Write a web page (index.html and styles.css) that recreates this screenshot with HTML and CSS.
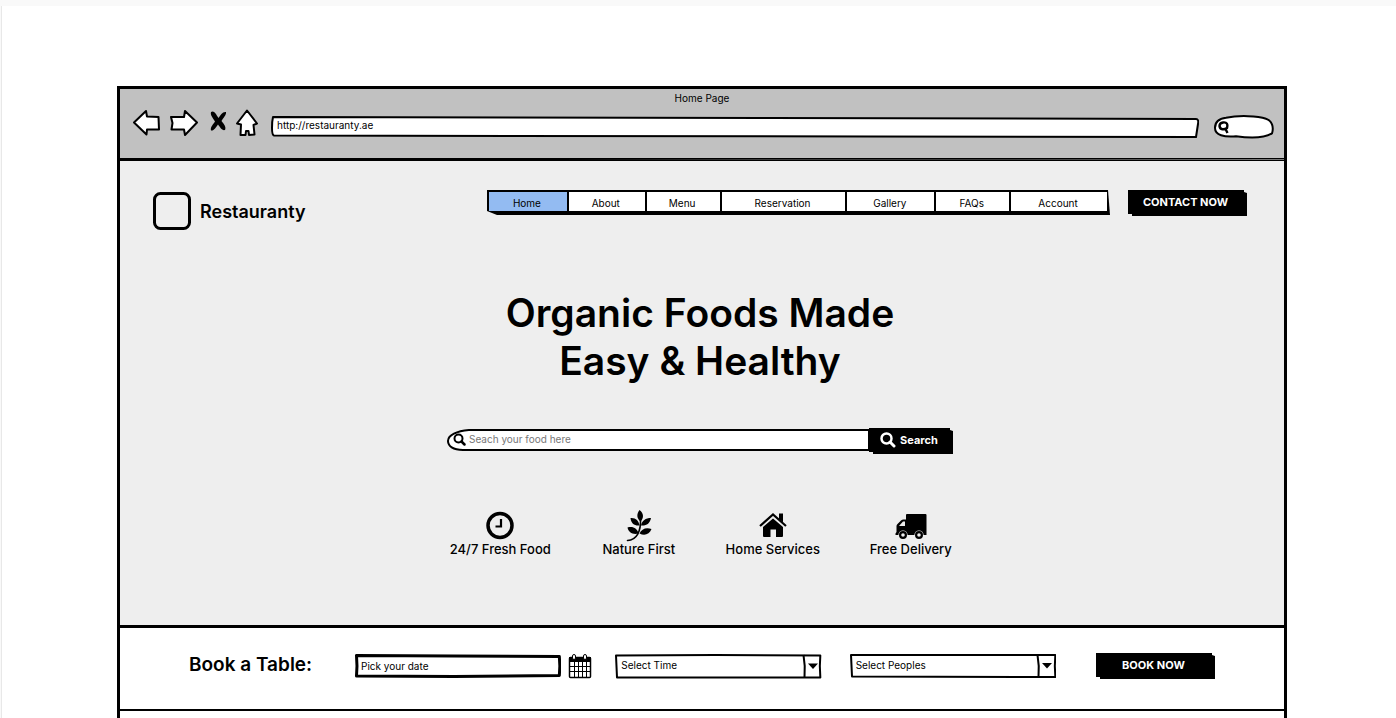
FILE: index.html
```html
<!DOCTYPE html>
<html lang="en">
<head>
<meta charset="utf-8">
<meta name="viewport" content="width=device-width, initial-scale=1">
<title>Home Page</title>
<link rel="stylesheet" href="styles.css">
</head>
<body>
<div class="canvas">
<div class="frame">
  <header class="browser">
    <div class="browser-title">Home Page</div>
    <div class="toolbar">
      <button class="tool" type="button" aria-label="Back"><svg width="28" height="28" viewBox="0 0 28 28"><path d="M1 13.500 13 2 14 7.500 25.500 8 26 20.500 14 20.500 13.500 25.500z"/></svg></button>
      <button class="tool" type="button" aria-label="Forward"><svg width="28" height="28" viewBox="0 0 28 28"><path d="M1 8 14 8 15 2 27 13.500 15 26 14 20.500 1.500 20.500 2.500 14z"/></svg></button>
      <button class="tool" type="button" aria-label="Stop"><svg width="20" height="28" viewBox="0 0 20 28"><path class="solid" d="M4 3C7 1 9 5 11.500 9C13.500 6 15.500 2.500 19 3C19.500 6 16 9 14.500 12C17 15 19.500 18 18 21C15 22 13 18 11 15.500C9 18 7 22 4 21.500C3 18 6.500 15 8 12.500C6 9 3 6 4 3z"/></svg></button>
      <button class="tool" type="button" aria-label="Home"><svg width="22" height="28" viewBox="0 0 22 28"><path d="M11 1.500 1 14.500 5 15.500 4.500 26 9.500 26 10 22 12.500 22 13 26 18.500 25.500 17.500 16 21 14.500z"/></svg></button>
      <div class="control url">
        <svg class="sketch" viewBox="0 0 928 22" preserveAspectRatio="none" aria-hidden="true"><path d="M2 1 500 2 925 3Q928 3 927 8L925 21 600 20.500 3 19.500Q1 19 1 12Q1 5 2 1z"/></svg>
        <input type="text" value="http://restauranty.ae" aria-label="Address">
      </div>
      <div class="control quick">
        <svg class="sketch" viewBox="0 0 60 26" preserveAspectRatio="none" aria-hidden="true"><path d="M12 3C25 0 44 1 52 4C58 6 60 13 58 20C50 25 35 25 22 23C10 24 1 22 1 14C1 8 5 4 12 3z"/></svg>
        <svg class="quick-icon" width="12" height="14" viewBox="0 0 12 14" aria-hidden="true"><path d="M5 1.500C9 1 10 3 9 7C6 9 2 9 1.500 5C1.500 3 2 2 5 1.500zM7.500 8 9.500 12" fill="none" stroke="#000" stroke-width="2.400"/></svg>
        <input type="search" aria-label="Web search">
      </div>
    </div>
    <svg class="rule" viewBox="0 0 1164 3" preserveAspectRatio="none" aria-hidden="true"><path d="M0 0H1164V3H0z"/><path fill="#777" d="M440 1.500 1164 1V2z"/></svg>
  </header>

  <main>
  <section class="hero">
    <div class="site-header">
      <a class="brand" href="#">
        <svg width="38" height="38" viewBox="0 0 38 38" aria-hidden="true"><rect x="1.500" y="1.500" width="35" height="35" rx="6" fill="none" stroke="#000" stroke-width="3"/></svg>
        <span>Restauranty</span>
      </a>
      <nav aria-label="Main">
        <a class="active" href="#">Home</a>
        <a href="#">About</a>
        <a href="#">Menu</a>
        <a href="#">Reservation</a>
        <a href="#">Gallery</a>
        <a href="#">FAQs</a>
        <a href="#">Account</a>
      </nav>
      <button class="button wide" type="button">CONTACT NOW</button>
    </div>

    <h1>Organic Foods Made<br>Easy &amp; Healthy</h1>

    <form class="search">
      <div class="control search-box">
        <svg class="sketch" viewBox="0 0 424 22" preserveAspectRatio="none" aria-hidden="true"><path d="M424 1 22 1C10 2 1 6 1 12C1 17 6 21 16 21L424 21z"/></svg>
        <svg class="search-icon" width="14" height="14" viewBox="0 0 14 14" aria-hidden="true"><circle cx="5.500" cy="5.500" r="4" fill="none" stroke="#000" stroke-width="2"/><path d="M8.500 8.500 11.500 11.500" stroke="#000" stroke-width="2.500" stroke-linecap="round"/></svg>
        <input type="text" placeholder="Seach your food here" aria-label="Search food">
      </div>
      <button class="button" type="button"><svg width="16" height="16" viewBox="0 0 16 16" aria-hidden="true"><circle cx="6.500" cy="6.500" r="5" fill="none" stroke="#fff" stroke-width="2.500"/><path d="M10 10 14 14" stroke="#fff" stroke-width="3" stroke-linecap="round"/></svg>Search</button>
    </form>

    <ul class="features">
      <li><svg width="28" height="30" viewBox="0 0 28 30" aria-hidden="true"><circle cx="14" cy="15.500" r="12" fill="none" stroke="#000" stroke-width="3.500"/><path d="M15 9V16.500H9.500" fill="none" stroke="#000" stroke-width="2.200"/></svg>24/7 Fresh Food</li>
      <li><svg width="26" height="32" viewBox="0 0 26 32" aria-hidden="true"><path d="M13.500 0C18 3.500 18 8 14.500 11.500C10.500 8 10.500 4 13.500 0zM4.500 8C9.500 7.500 13 10.500 13.500 15.500C8.500 16 5 13.500 4.500 8zM25 8C19.500 8 16 10.500 15 15.500C20.500 16 24 13.500 25 8zM1.500 17.500C7 16 11.500 18.500 12.500 23.500C7 25 2.500 22.500 1.500 17.500zM25.500 19C20 17 15.500 19 13.500 23.500C18.500 26 23.500 24.500 25.500 19z"/><path d="M14.500 9C15 21 11 30 1.500 30.500" fill="none" stroke="#000" stroke-width="1.600" stroke-linecap="round"/></svg>Nature First</li>
      <li><svg width="28" height="30" viewBox="0 0 28 30" aria-hidden="true"><path d="M4 17 14 8.500 24 17V26Q24 27 23 27H17V19.500H11.500V27H5Q4 27 4 26z"/><path d="M1 16 14 4.500 27 16" fill="none" stroke="#000" stroke-width="2.200"/><path d="M20 3.500H24V12.500L20 9z"/></svg>Home Services</li>
      <li><svg width="32" height="30" viewBox="0 0 32 30" aria-hidden="true"><path fill-rule="evenodd" d="M11 5Q11 4 12 4H30.500Q31.500 4 31.500 5V25H.5V23.500L1.500 22V16Q1.500 15 2.500 14L6 10.500Q7 9.500 8.500 9.500H11zM4 16H10V11.500H8z"/><circle cx="8" cy="25" r="4.600" fill="#eee"/><circle cx="24" cy="25" r="4.600" fill="#eee"/><circle cx="8" cy="25" r="2.900" fill="none" stroke="#000" stroke-width="2.200"/><circle cx="24" cy="25" r="2.900" fill="none" stroke="#000" stroke-width="2.200"/></svg>Free Delivery</li>
    </ul>
  </section>

  <form class="booking">
    <h2>Book a Table:</h2>
    <div class="control date">
      <svg class="sketch" viewBox="0 0 208 24" preserveAspectRatio="none" aria-hidden="true"><path d="M1.500 1.500 100 2 206 2.500 206.500 12 206 21.500 100 22.500 1.500 22 2 12z"/></svg>
      <input type="text" value="Pick your date" aria-label="Date">
    </div>
    <button class="calendar" type="button" aria-label="Open calendar"><svg width="24" height="26" viewBox="0 0 24 26"><rect x="1.500" y="4.500" width="21" height="20" rx="1" fill="#fff" stroke="#000" stroke-width="1.500"/><path d="M1 4H23V9H1z"/><path d="M6.500 9V24M10.500 9V24M14.500 9V24M18.500 9V24M2 13.500H22M2 18.500H22" fill="none" stroke="#000"/><rect x="4.500" y="1.500" width="3" height="5" rx="1.500" fill="#fff" stroke="#000"/><rect x="15.500" y="1.500" width="3" height="5" rx="1.500" fill="#fff" stroke="#000"/></svg></button>
    <div class="control choice">
      <svg class="sketch" viewBox="0 0 206 25" preserveAspectRatio="none" aria-hidden="true"><path d="M1 1.500 100 1 205 1.500 204.500 12 205 23.500 2 23.500z"/></svg>
      <svg class="drop" width="20" height="25" viewBox="0 0 20 25" aria-hidden="true"><path d="M1.500 1Q3.500 12 2.500 24" fill="none" stroke="#000" stroke-width="2"/><path d="M6 9.500H16L11 15z"/></svg>
      <select aria-label="Time"><option>Select Time</option></select>
    </div>
    <div class="control choice">
      <svg class="sketch" viewBox="0 0 206 25" preserveAspectRatio="none" aria-hidden="true"><path d="M1 1 100 1 205 1 204.500 12 205 23 2 22.500z"/></svg>
      <svg class="drop" width="20" height="25" viewBox="0 0 20 25" aria-hidden="true"><path d="M1.500 1Q3.500 12 2.500 23" fill="none" stroke="#000" stroke-width="2"/><path d="M6 9H16L11 14.500z"/></svg>
      <select aria-label="Peoples"><option>Select Peoples</option></select>
    </div>
    <button class="button wide" type="button">BOOK NOW</button>
  </form>
  </main>
</div>
</div>
</body>
</html>
```
FILE: styles.css
```css
* { box-sizing: border-box; }

body {
  margin: 0;
  min-height: 100vh;
  display: flex;
  flex-direction: column;
  padding-top: 6px;
  background: #f9f9f9;
  color: #000;
  font-family: Inter, "Liberation Sans", sans-serif;
  font-size: 10px;
}

button, input, select { font: inherit; color: inherit; }
button { padding: 0; border: 0; background: none; }
svg { display: block; flex: none; }
a { color: inherit; text-decoration: none; }

.canvas {
  flex: 1;
  display: flex;
  margin-left: 1px;
  padding: 80px 109px 0 115px;
  border-left: 1px solid #e8e8e8;
  background: #fff;
}

.frame {
  flex: 1;
  min-width: 0;
  border: 3px solid #000;
  border-bottom: 0;
}

/* Browser chrome */
.browser { background: #c1c1c1; }
.browser-title { line-height: 18px; text-align: center; }
.toolbar {
  display: flex;
  align-items: center;
  gap: 9px;
  padding: 0 10px 19px 13px;
}
.tool path { fill: #fff; stroke: #000; stroke-width: 2; stroke-linejoin: round; }
.tool .solid { fill: #000; stroke: none; }
.rule { width: 100%; height: 3px; }

/* Hand-drawn form controls */
.control { position: relative; display: flex; min-width: 0; height: 24px; }
.control input, .control select {
  position: relative;
  width: 100%;
  min-width: 0;
  padding: 0 6px 2px;
  border: 0;
  background: transparent;
  appearance: none;
}
.sketch { position: absolute; inset: 0; width: 100%; height: 100%; }
.sketch path {
  fill: #fff;
  stroke: #000;
  stroke-width: 2;
  stroke-linejoin: round;
  vector-effect: non-scaling-stroke;
}
.url { flex: 1; height: 22px; margin: 7px 6px 0 4px; }
.url input { padding-bottom: 4px; }
.quick { flex: none; width: 60px; margin-top: 8px; }
.quick-icon { position: absolute; left: 4px; top: 6px; }

.button {
  display: flex;
  align-items: center;
  justify-content: center;
  gap: 4px;
  width: 84px;
  height: 26px;
  padding: 0 4px 2px 0;
  background: #000;
  color: #fff;
  font-size: 11px;
  font-weight: 700;
  white-space: nowrap;
  clip-path: polygon(0 0, calc(100% - 3px) 0, calc(100% - 3px) 2px, 100% 3px, 100% 100%, 4px 100%, 4px calc(100% - 2px), 0 calc(100% - 2px));
}
.wide { flex: none; width: 119px; }

/* Hero */
.hero {
  display: flex;
  flex-direction: column;
  align-items: center;
  padding: 29px 37px 67px 33px;
  border-bottom: 3px solid #000;
  background: #eee;
}
.site-header { align-self: stretch; display: flex; align-items: flex-start; }
.brand {
  display: flex;
  align-items: center;
  gap: 9px;
  margin: 2px auto 0 0;
  font-size: 18px;
  font-weight: 600;
}
nav {
  flex: 0 1 623px;
  display: grid;
  grid-template-columns: 78fr 76fr 73fr 124fr 87fr 73fr 96fr;
  gap: 2px;
  height: 25px;
  margin-right: 18px;
  padding: 2px 3px 4px 2px;
  background: #000;
  clip-path: polygon(0 0, calc(100% - 2px) 0, 100% 100%, 10px 100%, 0 calc(100% - 4px));
}
nav a {
  display: flex;
  align-items: center;
  justify-content: center;
  padding: 2px 2px 0 0;
  background: #fff;
}
nav .active { background: #93bbf2; }

h1 {
  margin: 59px 0 0;
  font-size: 39px;
  line-height: 48px;
  font-weight: 600;
  text-align: center;
}

.search { display: flex; width: 506px; max-width: 100%; margin-top: 43px; }
.search-box { flex: 1; height: 22px; margin-top: 1px; }
.search-icon { position: absolute; left: 6px; top: 4px; }
.search-box input { padding: 0 6px 3px 22px; }
.search-box input::placeholder { color: #777; opacity: 1; }

.features {
  display: grid;
  grid-template-columns: 106fr 76fr 97fr 84fr;
  gap: 47px;
  width: 506px;
  max-width: 100%;
  margin: 56px 0 0;
  padding: 0;
  list-style: none;
  font-size: 13px;
  line-height: 18px;
  font-weight: 500;
}
.features li {
  display: grid;
  grid-template-rows: 30px 18px;
  justify-items: center;
  white-space: nowrap;
}

/* Booking bar */
.booking {
  display: flex;
  align-items: center;
  padding: 24px 69px 29px 69px;
  border-bottom: 2px solid #000;
  background: #fff;
}
h2 {
  flex: none;
  min-width: 126px;
  margin: 0 40px 0 0;
  padding-bottom: 2px;
  font-size: 19px;
  line-height: 26px;
  font-weight: 600;
}
.date { flex: 1; }
.date input { padding-bottom: 0; }
.date .sketch path { stroke-width: 3; }
.calendar { margin-left: 7px; }
.choice { flex: 1; height: 25px; margin-left: 23px; }
.choice ~ .choice { margin-left: 28px; }
.drop { position: absolute; right: 0; top: 0; }
.booking .wide { margin-left: 40px; }
```
